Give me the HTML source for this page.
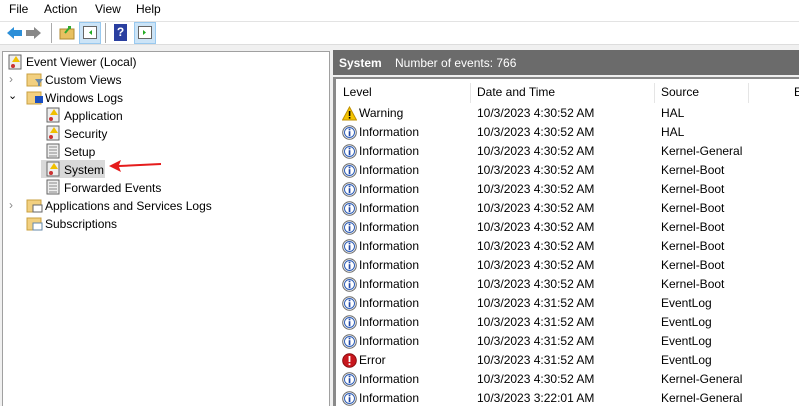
<!DOCTYPE html>
<html><head><style>
html,body{margin:0;width:799px;height:406px;overflow:hidden}
body{background:#f0f0f0;font-family:"Liberation Sans",sans-serif;font-size:12px;color:#000;position:relative}
.a{position:absolute;white-space:nowrap}
.menu{position:absolute;left:0;top:0;width:799px;height:21px;background:#fff;border-bottom:1px solid #e3e3e3}
.menu span{position:absolute;top:2px}
.tb{position:absolute;top:22px;left:0;width:799px;height:22px;background:#fff;border-bottom:1px solid #ddd}
.left{position:absolute;left:2px;top:51px;width:326px;height:370px;background:#fff;border:1px solid #a0a0a0}
.band{position:absolute;left:333px;top:50px;width:466px;height:25px;background:#6b6b6b;color:#fff}
.list{position:absolute;left:333px;top:77px;width:466px;height:340px;background:#fff;border-left:3px solid #8a8a8a;border-top:2px solid #8a8a8a}
.row{position:absolute;left:0;height:19px;line-height:19px;width:466px}
.row span{position:absolute}
.ico{position:absolute;left:6px;top:2px;width:15px;height:15px}
</style></head><body>
<div class="menu"><span style="left:9px">File</span><span style="left:44px">Action</span><span style="left:95px">View</span><span style="left:136px">Help</span></div>
<div class="tb">
<svg class="a" style="left:5px;top:3px" width="40" height="16"><path d="M2 8 L9 2 L9 5 L17 5 L17 11 L9 11 L9 14Z" fill="#2c8fd8"/><path d="M36 8 L29 2 L29 5 L21 5 L21 11 L29 11 L29 14Z" fill="#888"/></svg>
<div class="a" style="left:51px;top:1px;width:1px;height:20px;background:#aaa"></div>
<svg class="a" style="left:59px;top:2px" width="16" height="16"><rect x="1" y="5" width="14" height="10" fill="#e8c060" stroke="#b08a30"/><path d="M6 9 L11 3 M9 3 L11 3 L11 5" stroke="#3a3" stroke-width="2" fill="none"/></svg>
<div class="a" style="left:79px;top:0px;width:22px;height:22px;background:#cce4f7;border:1px solid #99c9ef;box-sizing:border-box"></div>
<svg class="a" style="left:83px;top:4px" width="14" height="13"><rect x=".5" y=".5" width="13" height="12" fill="#fff" stroke="#666"/><path d="M9 4 L6 6.5 L9 9Z" fill="#2a2"/></svg>
<div class="a" style="left:105px;top:1px;width:1px;height:20px;background:#aaa"></div>
<div class="a" style="left:114px;top:2px;width:13px;height:17px;background:#2a3fa0;color:#fff;font-weight:bold;text-align:center;line-height:17px">?</div>
<div class="a" style="left:134px;top:0px;width:22px;height:22px;background:#cce4f7;border:1px solid #99c9ef;box-sizing:border-box"></div>
<svg class="a" style="left:138px;top:4px" width="14" height="13"><rect x=".5" y=".5" width="13" height="12" fill="#fff" stroke="#666"/><path d="M5 4 L8 6.5 L5 9Z" fill="#2a2"/></svg>
</div>
<div class="left">
<div class="a" style="left:38px;top:108px;width:64px;height:18px;background:#d9d9d9"></div>
<svg class="a" style="left:4px;top:2px" width="16" height="16"><rect x="2" y="1" width="12" height="14" fill="#eee" stroke="#666"/><path d="M9 2 L13 8 L5 8Z" fill="#f0c000"/><circle cx="6" cy="12" r="2" fill="#c33"/></svg>
<div class="a" style="left:23px;top:3px">Event Viewer (Local)</div>
<div class="a" style="left:6px;top:20px;color:#888">&#8250;</div>
<svg class="a" style="left:23px;top:19px" width="18" height="16"><rect x="1" y="3" width="14" height="12" fill="#f2d080" stroke="#c9a040"/><path d="M9 8 L17 8 L14 12 L14 15 L12 15 L12 12Z" fill="#6b8aa8"/></svg>
<div class="a" style="left:42px;top:21px">Custom Views</div>
<div class="a" style="left:5px;top:37px;font-size:11px">&#8964;</div>
<svg class="a" style="left:23px;top:37px" width="18" height="16"><rect x="1" y="3" width="14" height="12" fill="#f2d080" stroke="#c9a040"/><rect x="9" y="7" width="8" height="7" fill="#1a4fc0"/></svg>
<div class="a" style="left:42px;top:39px">Windows Logs</div>
<svg class="a" style="left:42px;top:55px" width="16" height="16"><rect x="2" y="1" width="12" height="14" fill="#eee" stroke="#666"/><path d="M9 2 L13 8 L5 8Z" fill="#f0c000"/><circle cx="6" cy="12" r="2" fill="#c33"/></svg>
<div class="a" style="left:61px;top:57px">Application</div>
<svg class="a" style="left:42px;top:73px" width="16" height="16"><rect x="2" y="1" width="12" height="14" fill="#eee" stroke="#666"/><path d="M9 2 L13 8 L5 8Z" fill="#f0c000"/><circle cx="6" cy="12" r="2" fill="#c33"/></svg>
<div class="a" style="left:61px;top:75px">Security</div>
<svg class="a" style="left:42px;top:91px" width="16" height="16"><rect x="2" y="1" width="12" height="14" fill="#eee" stroke="#666"/><path d="M4 4H12M4 7H12M4 10H12M4 13H12" stroke="#888"/></svg>
<div class="a" style="left:61px;top:93px">Setup</div>
<svg class="a" style="left:42px;top:109px" width="16" height="16"><rect x="2" y="1" width="12" height="14" fill="#eee" stroke="#666"/><path d="M9 2 L13 8 L5 8Z" fill="#f0c000"/><circle cx="6" cy="12" r="2" fill="#c33"/></svg>
<div class="a" style="left:61px;top:111px">System</div>
<svg class="a" style="left:104px;top:107px" width="56" height="14"><path d="M2 7 L14 1 L12 6 L54 4 L54 6 L12 8 L14 13Z" fill="#e51c1c"/></svg>
<svg class="a" style="left:42px;top:127px" width="16" height="16"><rect x="2" y="1" width="12" height="14" fill="#eee" stroke="#666"/><path d="M4 4H12M4 7H12M4 10H12M4 13H12" stroke="#888"/></svg>
<div class="a" style="left:61px;top:129px">Forwarded Events</div>
<div class="a" style="left:6px;top:146px;color:#888">&#8250;</div>
<svg class="a" style="left:23px;top:145px" width="18" height="16"><rect x="1" y="3" width="14" height="12" fill="#f2d080" stroke="#c9a040"/><rect x="7" y="8" width="9" height="7" fill="#fff" stroke="#666"/></svg>
<div class="a" style="left:42px;top:147px">Applications and Services Logs</div>
<svg class="a" style="left:23px;top:163px" width="18" height="16"><rect x="1" y="3" width="14" height="12" fill="#f2d080" stroke="#c9a040"/><rect x="7" y="8" width="9" height="7" fill="#fff" stroke="#68a"/></svg>
<div class="a" style="left:42px;top:165px">Subscriptions</div>
</div>
<div class="band"><span class="a" style="left:6px;top:6px;font-weight:bold">System</span><span class="a" style="left:62px;top:6px">Number of events: 766</span></div>
<div class="list">
<div class="row" style="top:2px;height:22px;line-height:22px"><span style="left:7px">Level</span><span style="left:141px">Date and Time</span><span style="left:325px">Source</span><span style="left:458px">E</span>
<div class="a" style="left:134px;top:2px;width:1px;height:20px;background:#e5e5e5"></div><div class="a" style="left:318px;top:2px;width:1px;height:20px;background:#e5e5e5"></div><div class="a" style="left:412px;top:2px;width:1px;height:20px;background:#e5e5e5"></div></div>
</div>
<div id="rows" class="a" style="left:336px;top:104px;width:463px;height:303px"></div>
<script>
var d=[["W","10/3/2023 4:30:52 AM","HAL"],["I","10/3/2023 4:30:52 AM","HAL"],["I","10/3/2023 4:30:52 AM","Kernel-General"],["I","10/3/2023 4:30:52 AM","Kernel-Boot"],["I","10/3/2023 4:30:52 AM","Kernel-Boot"],["I","10/3/2023 4:30:52 AM","Kernel-Boot"],["I","10/3/2023 4:30:52 AM","Kernel-Boot"],["I","10/3/2023 4:30:52 AM","Kernel-Boot"],["I","10/3/2023 4:30:52 AM","Kernel-Boot"],["I","10/3/2023 4:30:52 AM","Kernel-Boot"],["I","10/3/2023 4:31:52 AM","EventLog"],["I","10/3/2023 4:31:52 AM","EventLog"],["I","10/3/2023 4:31:52 AM","EventLog"],["E","10/3/2023 4:31:52 AM","EventLog"],["I","10/3/2023 4:30:52 AM","Kernel-General"],["I","10/3/2023 3:22:01 AM","Kernel-General"]];
var h="";
d.forEach(function(r,i){
var ic,t;
if(r[0]=="W"){ic='<svg class="ico" viewBox="0 0 15 15"><path d="M7.5 1 L14.5 14 L0.5 14Z" fill="#f5c400" stroke="#c09000"/><rect x="6.8" y="5" width="1.6" height="5" fill="#000"/><rect x="6.8" y="11" width="1.6" height="1.6" fill="#000"/></svg>';t="Warning";}
else if(r[0]=="E"){ic='<svg class="ico" viewBox="0 0 15 15"><circle cx="7.5" cy="7.5" r="6.8" fill="#c8171e" stroke="#8a0d10"/><rect x="6.6" y="3" width="1.8" height="6" fill="#fff"/><rect x="6.6" y="10.3" width="1.8" height="1.8" fill="#fff"/></svg>';t="Error";}
else{ic='<svg class="ico" viewBox="0 0 15 15"><circle cx="7.5" cy="7.5" r="6.8" fill="#f4f4f4" stroke="#6a6a6a"/><circle cx="7.5" cy="7.5" r="5" fill="#fff" stroke="#2f5fb8"/><rect x="6.7" y="6.2" width="1.7" height="5" fill="#2248a8"/><rect x="6.7" y="3.6" width="1.7" height="1.7" fill="#2248a8"/></svg>';t="Information";}
h+='<div class="row" style="top:'+(i*19)+'px">'+ic+'<span style="left:23px">'+t+'</span><span style="left:141px">'+r[1]+'</span><span style="left:325px">'+r[2]+'</span></div>';
});
document.getElementById("rows").innerHTML=h;
</script>
</body></html>
